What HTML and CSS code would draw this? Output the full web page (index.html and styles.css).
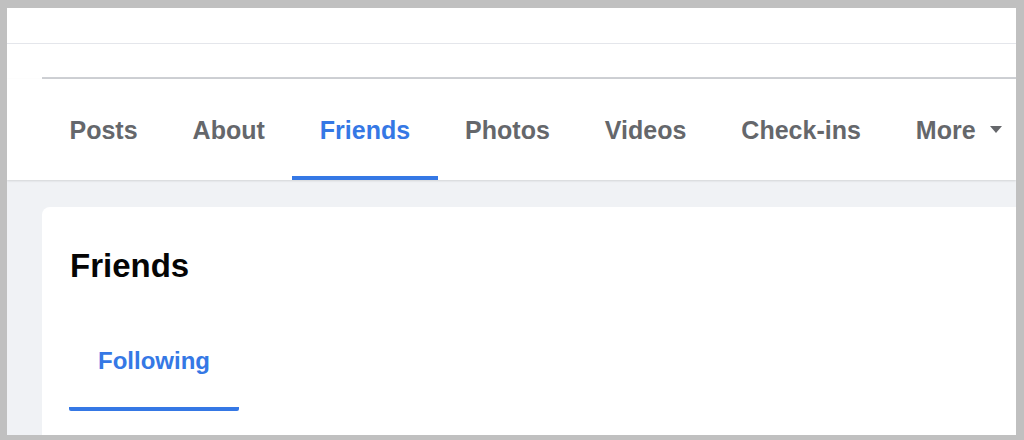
FILE: index.html
```html
<!DOCTYPE html>
<html lang="en">
<head>
<meta charset="utf-8">
<title>Friends</title>
<link rel="stylesheet" href="styles.css">
</head>
<body>
<div class="frame">
  <div class="topbar"></div>
  <div class="cover">
    <div class="cover-rule"></div>
  </div>
  <nav class="tabs">
    <a class="tab">Posts</a>
    <a class="tab">About</a>
    <a class="tab active">Friends</a>
    <a class="tab">Photos</a>
    <a class="tab">Videos</a>
    <a class="tab">Check-ins</a>
    <a class="tab more">More
      <svg class="caret" width="12" height="7" viewBox="0 0 12 7"><path d="M0 0h12L6 7z" fill="#65676b"/></svg>
    </a>
  </nav>
  <main class="main">
    <section class="card">
      <h1 class="card-title">Friends</h1>
      <div class="subtabs">
        <a class="subtab active">Following</a>
      </div>
    </section>
  </main>
</div>
</body>
</html>
```

FILE: styles.css
```css
* { box-sizing: border-box; }
html, body { margin: 0; padding: 0; }
body {
  font-family: "Liberation Sans", Arial, sans-serif;
  background: #c0c0c0;
}
.frame {
  width: 1024px;
  height: 440px;
  border-style: solid;
  border-color: #c0c0c0;
  border-width: 8px 8px 5px 7px;
  background: #ffffff;
  display: flex;
  flex-direction: column;
  overflow: hidden;
}
.topbar {
  height: 36px;
  border-bottom: 1px solid #e4e6eb;
  flex: none;
}
.cover {
  height: 35px;
  padding: 33px 0 0 35px;
  flex: none;
}
.cover-rule {
  height: 2px;
  background: #ced0d4;
}
.tabs {
  flex: none;
  height: 101px;
  display: flex;
  padding-left: 35px;
  background: #ffffff;
  box-shadow: 0 1px 2px rgba(0, 0, 0, 0.12);
  position: relative;
  z-index: 1;
}
.tab {
  display: flex;
  align-items: center;
  padding: 6px 27.5px 0;
  border-bottom: 4px solid transparent;
  font-size: 25px;
  font-weight: 700;
  color: #65676b;
  white-space: nowrap;
}
.tab.active {
  color: #3578e5;
  border-bottom-color: #3578e5;
}
.more .caret {
  margin-left: 14px;
  margin-top: -3px;
}
.main {
  flex: 1;
  background: #f0f2f5;
  padding: 27px 0 0 35px;
  display: flex;
}
.card {
  flex: 1;
  background: #ffffff;
  border-radius: 8px 0 0 0;
  padding-top: 40px;
}
.card-title {
  margin: 0 0 0 28px;
  font-size: 33px;
  line-height: 38px;
  font-weight: 700;
  color: #050505;
}
.subtabs {
  display: flex;
  margin: 62px 0 0 27px;
}
.subtab {
  width: 170px;
  padding: 0 0 32px;
  text-align: center;
  font-size: 24px;
  line-height: 28px;
  font-weight: 700;
  color: #3578e5;
  border-bottom: 4px solid #3578e5;
  border-radius: 0 0 2px 2px;
}
```
